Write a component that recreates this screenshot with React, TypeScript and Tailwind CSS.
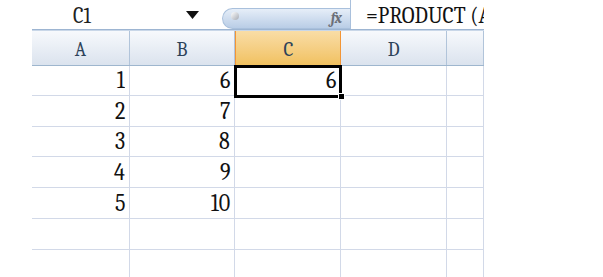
const cols = [
  { name: 'A', w: 'w-[98px]' },
  { name: 'B', w: 'w-[105px]' },
  { name: 'C', w: 'w-[106px]' },
  { name: 'D', w: 'w-[106px]' },
  { name: '', w: 'w-[37px]' },
]

const rows = [
  { a: '1', b: '6', h: 'h-[30px]' },
  { a: '2', b: '7', h: 'h-[31px]' },
  { a: '3', b: '8', h: 'h-[30px]' },
  { a: '4', b: '9', h: 'h-[31px]' },
  { a: '5', b: '10', h: 'h-[31px]' },
  { a: '', b: '', h: 'h-[31px]' },
  { a: '', b: '', h: 'h-[31px]' },
]

export default function App() {
  return (
    <div className="w-[603px] h-[277px] bg-white overflow-hidden font-serif">
      <div className="ml-[32px] w-[452px] overflow-hidden">
        {/* formula bar */}
        <div className="flex h-[29px]">
          <div className="w-[190px] flex items-center">
            <span className="ml-[41px] text-[22px] leading-none text-[#222] scale-x-[0.92] origin-left mt-[2px]">C1</span>
            <svg className="ml-[94px] mt-[1px]" width="13" height="8" viewBox="0 0 13 8">
              <path d="M0 0 H13 L6.5 8 Z" fill="#111" />
            </svg>
          </div>
          <div className="w-[128px] mt-[8px] h-[21px] rounded-l-full bg-gradient-to-b from-[#e6eef8] to-[#b9cde6] border border-[#a9c0dc] border-r-0 relative flex items-center justify-end pr-[9px]">
            <span className="absolute left-[8px] top-[3px] w-[8px] h-[8px] rounded-full bg-gradient-to-br from-[#ffffff] to-[#a5aab3]" />
            <span className="text-[15px] italic font-bold text-[#6b6f78] leading-none tracking-[-1px]">fx</span>
          </div>
          <div className="w-[134px] border-l border-[#a9c0dc] flex items-center pl-[15px] overflow-hidden whitespace-nowrap">
            <span className="text-[23px] leading-none text-[#111] scale-x-[0.93] origin-left mt-[2px]">=PRODUCT (A</span>
          </div>
        </div>
        <div className="h-[2px] bg-[#9db5d2] border-b border-[#c9d7e8]" />
        {/* column headers */}
        <div className="flex h-[35px] border-b border-[#9eb6ce]">
          {cols.map((c) => (
            <div
              key={c.name + c.w}
              className={`${c.w} shrink-0 flex items-center justify-center text-[21px] leading-none ${
                c.name === 'C'
                  ? 'bg-gradient-to-b from-[#f9dda6] to-[#f1c15f] border-x border-[#f29536] text-[#2d4259]'
                  : 'bg-gradient-to-b from-[#f7f9fc] to-[#dbe3ee] border-r border-[#b1c4da] text-[#2d4259]'
              }`}
            >
              <span className="scale-x-[0.9] pt-[3px]">{c.name}</span>
            </div>
          ))}
        </div>
        {/* grid */}
        <div className="relative">
          {rows.map((r, i) => (
            <div key={i} className={`flex ${r.h} border-b border-[#d2d9e8]`}>
              {cols.map((c, j) => (
                <div
                  key={j}
                  className={`${c.w} shrink-0 border-r border-[#d2d9e8] flex items-end justify-end pr-[4px] pb-[3px] text-[24px] leading-none text-[#111]`}
                >
                  <span className="scale-x-[0.92] origin-right">
                    {j === 0 ? r.a : j === 1 ? r.b : j === 2 && i === 0 ? '6' : ''}
                  </span>
                </div>
              ))}
            </div>
          ))}
          {/* active cell */}
          <div className="absolute left-[202px] top-[-1px] w-[108px] h-[33px] border-[3px] border-black" />
          <div className="absolute left-[306px] top-[27px] w-[7px] h-[7px] bg-black border border-white" />
        </div>
      </div>
    </div>
  )
}
